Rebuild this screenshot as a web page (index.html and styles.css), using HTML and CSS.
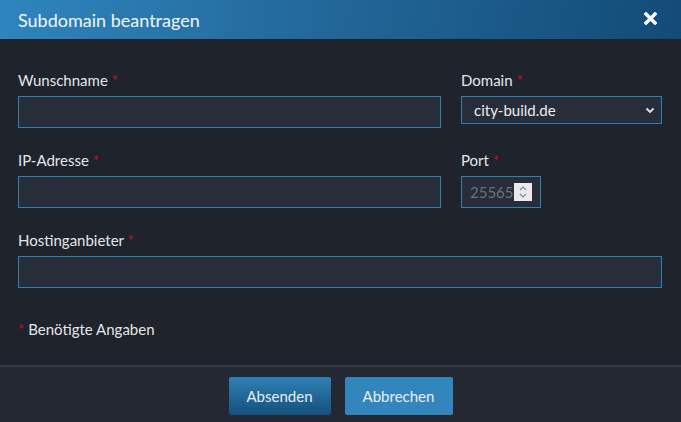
FILE: index.html
```html
<!DOCTYPE html>
<html lang="de">
<head>
<meta charset="utf-8">
<link rel="stylesheet" href="styles.css">
</head>
<body>
<div class="modal">
  <div class="modal-header">
    <span class="modal-title">Subdomain beantragen</span>
    <svg class="close" width="13" height="13" viewBox="0 0 13 13"><path d="M2 2 L11 11 M11 2 L2 11" stroke="#fff" stroke-width="3.4" stroke-linecap="square"/></svg>
  </div>
  <div class="modal-body">
    <div class="grid">
      <div class="field">
        <label class="label">Wunschname <span class="req">*</span></label>
        <input class="input" type="text">
      </div>
      <div class="field">
        <label class="label">Domain <span class="req">*</span></label>
        <div class="select">
          <span>city-build.de</span>
          <svg width="10" height="7" viewBox="0 0 10 7"><path d="M1.5 1.5 L5 5 L8.5 1.5" fill="none" stroke="#e6e6e6" stroke-width="1.8"/></svg>
        </div>
      </div>
      <div class="field">
        <label class="label">IP-Adresse <span class="req">*</span></label>
        <input class="input" type="text">
      </div>
      <div class="field">
        <label class="label">Port <span class="req">*</span></label>
        <div class="port">
          <input class="input port-input" type="text" placeholder="25565">
          <span class="spinner">
            <svg width="10" height="14" viewBox="0 0 10 14"><path d="M2 5 L5 2 L8 5 M2 9 L5 12 L8 9" fill="none" stroke="#8a8a8a" stroke-width="1.2"/></svg>
          </span>
        </div>
      </div>
      <div class="field full">
        <label class="label">Hostinganbieter <span class="req">*</span></label>
        <input class="input" type="text">
      </div>
    </div>
    <p class="note"><span class="req">*</span> Benötigte Angaben</p>
  </div>
  <div class="modal-footer">
    <button class="btn btn-primary">Absenden</button>
    <button class="btn btn-secondary">Abbrechen</button>
  </div>
</div>
</body>
</html>
```

FILE: styles.css
```css
* { box-sizing: border-box; }
html, body { margin: 0; padding: 0; }
body {
  background: #1f232b;
  font-family: Lato, "Open Sans", sans-serif;
  color: #e2e4e8;
}
.modal {
  width: 681px;
  height: 422px;
  display: flex;
  flex-direction: column;
  background: #1f232b;
}
.modal-header {
  height: 39px;
  flex: none;
  display: flex;
  align-items: center;
  justify-content: space-between;
  padding: 0 24px 0 18px;
  background: linear-gradient(100deg, #2f85be 0%, #23699b 45%, #124b76 100%);
}
.modal-title {
  font-size: 18px;
  color: #f4f7fa;
}
.close { display: block; margin-top: -2px; }
.modal-body {
  height: 326px;
  flex: none;
  padding: 31px 19px 0 18px;
}
.grid {
  display: grid;
  grid-template-columns: 1fr 201px;
  column-gap: 20px;
  row-gap: 22px;
}
.field { display: flex; flex-direction: column; }
.full { grid-column: 1 / 3; }
.label {
  font-size: 15px;
  line-height: 20px;
  height: 20px;
  margin-bottom: 6px;
  color: #e4e5e8;
}
.req { color: #c8101a; }
.input {
  height: 32px;
  width: 100%;
  background: #272d39;
  border: 1px solid #2e80b9;
  border-radius: 0;
  outline: none;
  font-family: inherit;
  font-size: 15px;
  color: #ddd;
  padding: 0 8px;
  margin: 0;
}
.select {
  height: 28px;
  display: flex;
  align-items: center;
  justify-content: space-between;
  background: #272d39;
  border: 1px solid #2e80b9;
  padding: 0 4px 0 12px;
  font-size: 15px;
  color: #eceef1;
}
.select svg { margin-right: 2px; }
.port { position: relative; width: 80px; }
.port-input { width: 80px; padding: 0 0 0 8px; }
.port-input::placeholder { color: #6c717b; opacity: 1; }
.spinner {
  position: absolute;
  left: 53px;
  top: 7px;
  width: 18px;
  height: 18px;
  background: #e9e9ee;
  display: flex;
  align-items: center;
  justify-content: center;
}
.note {
  margin: 31px 0 0 0;
  font-size: 15px;
  line-height: 20px;
  color: #e4e5e8;
}
.modal-footer {
  flex: 1;
  background: #232833;
  border-top: 2px solid #353a46;
  display: flex;
  justify-content: center;
  align-items: flex-start;
  gap: 14px;
  padding: 10px 0 0 0;
}
.btn {
  height: 38px;
  border: none;
  border-radius: 2px;
  font-family: inherit;
  font-size: 15px;
  color: #e8eef4;
  padding: 0;
}
.btn-primary {
  width: 102px;
  background: linear-gradient(to bottom, #2f80b6 0%, #14507d 100%);
}
.btn-secondary {
  width: 108px;
  background: #3385bd;
}
```
